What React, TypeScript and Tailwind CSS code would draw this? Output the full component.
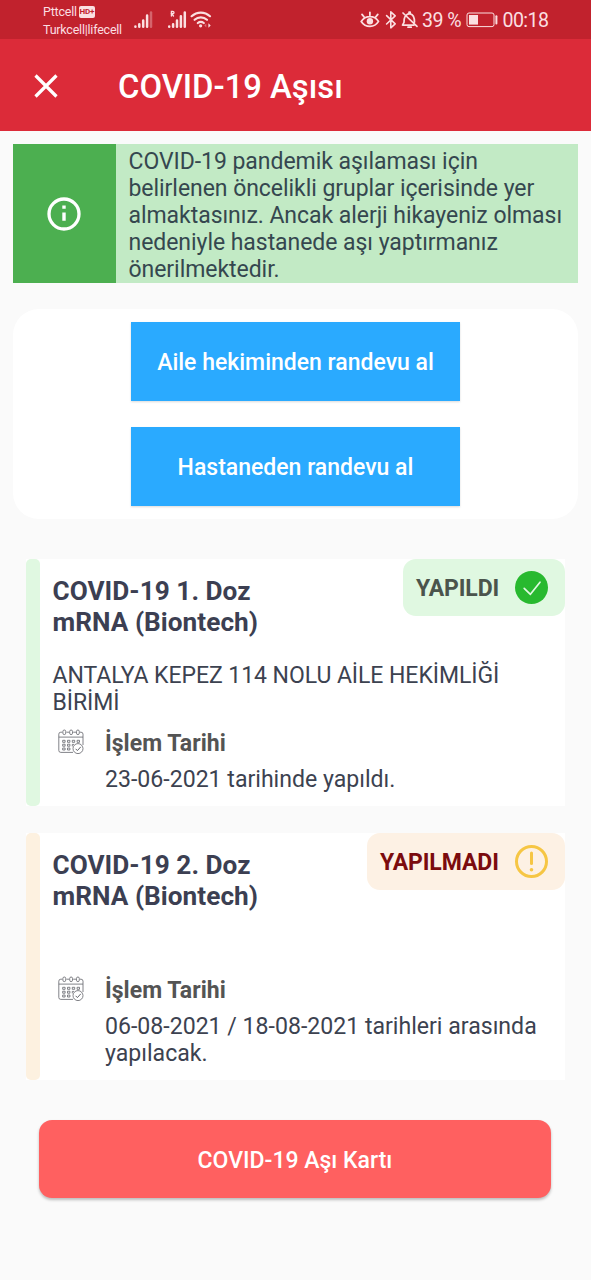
import type { ReactNode } from "react";

const CalendarIcon = () => (
  <svg className="block h-[26px] w-[26px]" viewBox="0 0 26 26" fill="none" stroke="#62636a" strokeWidth="0.8">
    <path d="M15 23.4H2.8a2 2 0 0 1-2-2V5.2a2 2 0 0 1 2-2H4.4M8.4 3.2H11.2M15.2 3.2H18M22 3.2h1a2 2 0 0 1 2 2V16M.8 8.1H25" />
    <rect x="4.9" y="1" width="2.8" height="4.6" rx="1.4" />
    <rect x="11.7" y="1" width="2.8" height="4.6" rx="1.4" />
    <rect x="18.5" y="1" width="2.8" height="4.6" rx="1.4" />
    <path d="M4.7 11.3h2.4v2H4.7zM9.5 11.3h2.4v2H9.5zM14.3 11.3h2.4v2h-2.4zM19.1 11.3h2.4v2h-2.4zM4.7 15.2h2.4v2H4.7zM9.5 15.2h2.4v2H9.5zM4.7 19h2.4v2H4.7zM9.5 19h2.4v2H9.5zM14.3 15.4h1.8M14.3 15.4v2" />
    <circle cx="20" cy="19.6" r="5" fill="white" />
    <path d="m17.6 19.8 1.8 1.8 3.4-3.8" strokeWidth="1" />
  </svg>
);

const StatusBar = () => (
  <div className="flex h-[39px] items-start bg-[#c1222d] pl-[43px] text-[#fbdfe1]">
    <div className="flex w-[79px] flex-col pt-[3px] text-[12.5px] leading-[18px] tracking-[-0.22px]">
      <div className="flex items-center gap-[2px]">
        <span>Pttcell</span>
        <span className="flex h-[12px] w-[16px] items-center justify-center rounded-[2px] bg-[#fbdfe1] text-[8px] leading-none font-bold text-[#c1222d]">HD+</span>
      </div>
      <span className="whitespace-nowrap">Turkcell|lifecell</span>
    </div>
    <svg className="mt-[10px] ml-[12px] h-[19px] w-[80px]" viewBox="0 0 80 19" fill="none" stroke="currentColor" strokeWidth="2.5" strokeLinecap="round">
      <path d="M1.4 16.6v.1M5.3 14.3v2.4M9.2 10.5v6.2M13.1 5.4v11.3" />
      <path d="M17 2.6v14.1" opacity=".35" />
      <path d="M35.2 16.6v.1M39.1 14.3v2.4M43 10.5v6.2M46.9 6.2v10.5M50.8 2.6v14.1" />
      <path d="M37.4 6V1.5h1.4c1.6 0 1.6 2.2 0 2.2h-1.2l1.9 2.3" strokeWidth="1.3" />
      <path d="M57.6 6.2c5.4-4.9 13-4.9 18.4 0M60.6 9.8c3.6-3.2 8.8-3.2 12.4 0M63.8 13c1.9-1.5 4.1-1.5 6 0" strokeWidth="2.2" />
      <circle cx="66.6" cy="15.8" r="1.6" fill="currentColor" stroke="none" />
      <path d="M74.4 13.2l2.3 2.3-2.3 2.3z" fill="currentColor" stroke="none" />
      <path d="m72.3 13.4-2 2.1 2 2.1z" fill="currentColor" stroke="none" opacity=".4" />
    </svg>
    <svg className="mt-[10px] ml-[146px] h-[19px] w-[60px]" viewBox="0 0 60 19" fill="none" stroke="currentColor" strokeWidth="1.8" strokeLinecap="round" strokeLinejoin="round">
      <path d="M1.2 11.4C5.5 4.9 14.5 4.9 18.5 11.4 14.5 18 5.5 18 1.2 11.4ZM2 4.4l2.1 2.6M9.9 2.3v3M17.8 4.4l-2.1 2.6" />
      <circle cx="9.9" cy="11.2" r="3.2" fill="currentColor" stroke="none" />
      <path d="m26.6 5.6 8.6 8.2-4.4 4V1.8l4.4 4-8.6 8.2" strokeWidth="1.6" />
      <path d="M45 6.7c-.8 1.2-1 3-1 5.7l-1.5 2.7H54M46.6 4.9c.8-.6 1.4-.9 2.4-1V2.2h1.2v1.7c3.8.9 4.3 3.8 4.3 8.2M43 3l14 13.3M48 17.2h3.2" strokeWidth="1.7" />
    </svg>
    <span className="ml-[2px] w-[40px] pt-[9px] text-[19.6px] leading-[23px] tracking-[-0.55px] whitespace-nowrap">39 %</span>
    <svg className="mt-[12px] ml-[3.5px] h-[16px] w-[33px]" viewBox="0 0 33 16" fill="none" stroke="currentColor">
      <rect x="1" y="1" width="27" height="13.6" rx="2" strokeWidth="1" />
      <rect x="3" y="3" width="9" height="9.6" fill="currentColor" stroke="none" />
      <path d="M30.4 4.2v7.2" strokeWidth="2" strokeLinecap="round" />
    </svg>
    <span className="ml-[4px] pt-[9px] text-[19.6px] leading-[23px] tracking-[-0.6px] whitespace-nowrap">00:18</span>
  </div>
);

const DoseCard = ({
  accent, title, badge, place, children,
}: { accent: string; title: string; badge: ReactNode; place?: string; children: string }) => (
  <article className="flex h-[247px] bg-white">
    <div className={`w-[13.5px] shrink-0 rounded-[5px] ${accent}`} />
    <div className="min-w-0 flex-1 pl-[13px]">
      <div className="flex items-start justify-between">
        <h2 className="mt-[17px] w-[230px] text-[26.2px] leading-[31px] font-bold tracking-[0.03px] text-[#3c3f52]">{title}</h2>
        {badge}
      </div>
      <p className="mt-[24px] min-h-[27px] text-[23px] leading-[27px] tracking-[-0.06px] text-[#3c4250]">{place}</p>
      <div className="mt-[13px] flex">
        <div className="w-[52.5px] pl-[5px]"><CalendarIcon /></div>
        <div className="flex-1 pt-[1px]">
          <h3 className="text-[23px] leading-[27px] font-bold tracking-[0.03px] text-[#545454]">İşlem Tarihi</h3>
          <p className="mt-[9px] text-[23.1px] leading-[27px] text-[#3c4250]">{children}</p>
        </div>
      </div>
    </div>
  </article>
);

export default function App() {
  return (
    <div className="h-[1280px] w-[591px] overflow-hidden bg-[#fafafa] font-['Roboto',sans-serif]">
      <StatusBar />
      <header className="flex h-[92px] items-center bg-[#dc2b39] text-white">
        <svg className="mt-[1px] ml-[34px] h-[24px] w-[24px]" viewBox="0 0 24 24" stroke="white" strokeWidth="3.2">
          <path d="m1.5 1.5 21 21M22.5 1.5l-21 21" />
        </svg>
        <h1 className="ml-[60px] pt-[4px] text-[32.8px] leading-[40px] font-medium whitespace-nowrap">COVID-19 Aşısı</h1>
      </header>

      <main className="px-[13px] pt-[13px]">
        <section className="flex h-[139px] bg-[#c2eac5]">
          <div className="flex w-[102.5px] shrink-0 items-center justify-center bg-[#4caf50]">
            <svg className="h-[34px] w-[34px]" viewBox="0 0 34 34" fill="none">
              <circle cx="17" cy="17" r="15" stroke="white" strokeWidth="3.3" />
              <path d="M17 15.4v8.4M17 8.6v3.2" stroke="white" strokeWidth="3.4" />
            </svg>
          </div>
          <p className="pt-[3.5px] pl-[13px] text-[23px] leading-[27px] tracking-[-0.05px] whitespace-nowrap text-[#35474f]">
            COVID-19 pandemik aşılaması için<br />
            belirlenen öncelikli gruplar içerisinde yer<br />
            almaktasınız. Ancak alerji hikayeniz olması<br />
            nedeniyle hastanede aşı yaptırmanız<br />
            önerilmektedir.
          </p>
        </section>

        <section className="mt-[26px] flex h-[210px] flex-col items-center gap-[26px] rounded-[26px] bg-white pt-[13px] text-[23px] font-medium text-white">
          <button className="h-[79px] w-[329px] bg-[#2aaaff] pt-[4px] shadow-[0_1px_2px_rgba(0,0,0,0.15)]">Aile hekiminden randevu al</button>
          <button className="h-[79px] w-[329px] bg-[#2aaaff] pt-[4px] shadow-[0_1px_2px_rgba(0,0,0,0.15)]">Hastaneden randevu al</button>
        </section>

        <div className="mt-[40px] flex flex-col gap-[27px] px-[13px]">
          <DoseCard
            accent="bg-[#e0f8e1]"
            title="COVID-19 1. Doz mRNA (Biontech)"
            place="ANTALYA KEPEZ 114 NOLU AİLE HEKİMLİĞİ BİRİMİ"
            badge={
              <div className="flex h-[57px] w-[162px] items-center justify-between rounded-[13px] bg-[#e0f8e1] pr-[17px] pl-[13px] text-[23px] font-bold tracking-[-0.1px] text-[#4b544c]">
                <span className="pt-[3px]">YAPILDI</span>
                <svg className="h-[33px] w-[33px]" viewBox="0 0 33 33" fill="none">
                  <circle cx="16.5" cy="16.5" r="16.5" fill="#28b92f" />
                  <path d="m9.2 17.3 6.2 6L25 11.2" stroke="#e0f8e1" strokeWidth="1.7" strokeLinecap="round" strokeLinejoin="round" />
                </svg>
              </div>
            }
          >
            23-06-2021 tarihinde yapıldı.
          </DoseCard>
          <DoseCard
            accent="bg-[#fdf1e0]"
            title="COVID-19 2. Doz mRNA (Biontech)"
            badge={
              <div className="flex h-[57px] w-[198px] items-center justify-between rounded-[13px] bg-[#fdf1e4] pr-[17px] pl-[13px] text-[23px] font-bold tracking-[-0.1px] text-[#7b0b0e]">
                <span className="pt-[3px]">YAPILMADI</span>
                <svg className="h-[33px] w-[33px]" viewBox="0 0 33 33" fill="none" stroke="#f6c644" strokeLinecap="round">
                  <circle cx="16.5" cy="16.5" r="15" strokeWidth="3" />
                  <path d="M16.5 8v10.5" strokeWidth="3" />
                  <circle cx="16.5" cy="24.7" r="1.8" fill="#f6c644" stroke="none" />
                </svg>
              </div>
            }
          >
            06-08-2021 / 18-08-2021 tarihleri arasında yapılacak.
          </DoseCard>
        </div>

        <button className="mx-[26px] mt-[40px] block h-[78px] w-[512px] rounded-[13px] bg-[#ff6060] pt-[4px] text-[23px] font-medium text-white shadow-[0_2px_3px_rgba(0,0,0,0.25)]">
          COVID-19 Aşı Kartı
        </button>
      </main>
    </div>
  );
}
